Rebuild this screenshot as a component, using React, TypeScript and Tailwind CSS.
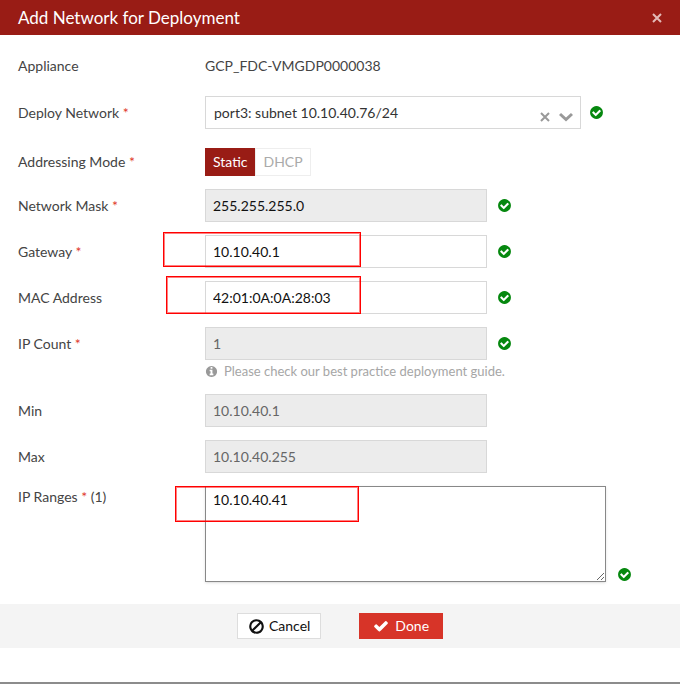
import { ReactNode, useState } from "react";
import clsx from "clsx";

const CHECK_CIRCLE =
  "M1412 734q0-28-18-46l-91-90q-19-19-45-19t-45 19l-408 407-226-226q-19-19-45-19t-45 19l-91 90q-18 18-18 46 0 27 18 45l362 362q19 19 45 19 27 0 46-19l543-543q18-18 18-45zm252 162q0 209-103 385.5t-279.5 279.5-385.5 103-385.5-103-279.5-279.5-103-385.5 103-385.5 279.5-279.5 385.5-103 385.5 103 279.5 279.5 103 385.5z";
const INFO_CIRCLE =
  "M1152 1376v-160q0-14-9-23t-23-9h-96v-512q0-14-9-23t-23-9h-320q-14 0-23 9t-9 23v160q0 14 9 23t23 9h96v320h-96q-14 0-23 9t-9 23v160q0 14 9 23t23 9h448q14 0 23-9t9-23zm-128-896v-160q0-14-9-23t-23-9h-192q-14 0-23 9t-9 23v160q0 14 9 23t23 9h192q14 0 23-9t9-23zm640 416q0 209-103 385.5t-279.5 279.5-385.5 103-385.5-103-279.5-279.5-103-385.5 103-385.5 279.5-279.5 385.5-103 385.5 103 279.5 279.5 103 385.5z";
const CHECK =
  "M1671 566q0 40-28 68l-724 724-136 136q-28 28-68 28t-68-28l-136-136-362-362q-28-28-28-68t28-68l136-136q28-28 68-28t68 28l294 295 656-657q28-28 68-28t68 28l136 136q28 28 28 68z";
const BAN =
  "M1440 893q0-161-87-295l-754 753q137 89 297 89 111 0 211.5-43.5t173.5-116.5 116-174.5 43-212.5zm-999 299l755-754q-135-91-300-91-148 0-273 73t-198 199-73 274q0 162 89 299zm1223-299q0 157-61 300t-163.5 246-245 164-298.5 61-298.5-61-245-164-163.5-246-61-300 61-299.5 163.5-245.5 245-164 298.5-61 298.5 61 245 164 163.5 245.5 61 299.5z";

const Icon = ({ path, className }: { path: string; className: string }) => (
  <svg
    viewBox="0 0 1792 1792"
    fill="currentColor"
    aria-hidden="true"
    className={clsx("shrink-0", className)}>
    <path d={path} />
  </svg>
);

const Cross = ({ className }: { className: string }) => (
  <svg
    viewBox="0 0 10 10"
    stroke="currentColor"
    strokeWidth="2"
    aria-hidden="true"
    className={className}>
    <path d="M1 1l8 8M9 1l-8 8" />
  </svg>
);

const Valid = () => <Icon path={CHECK_CIRCLE} className="size-[15px] text-[#06880f]" />;

const Highlight = ({ className }: { className: string }) => (
  <span
    aria-hidden="true"
    className={clsx(
      "pointer-events-none absolute border border-[#ff0000] ring-1 ring-[#ff0000]/50 ring-inset",
      className
    )}
  />
);

interface RowProps {
  label: string;
  htmlFor?: string;
  required?: boolean;
  suffix?: string;
  className?: string;
  children: ReactNode;
}

const Row = ({ label, htmlFor, required, suffix, className, children }: RowProps) => {
  const text = (
    <>
      {label}
      {required && <span className="text-[#e0382c]"> *</span>}
      {suffix && ` ${suffix}`}
    </>
  );
  return (
    <div className={clsx("flex", className)}>
      <div className="w-[187px] shrink-0">
        {htmlFor ? <label htmlFor={htmlFor}>{text}</label> : <span>{text}</span>}
      </div>
      <div className="relative flex min-w-0 flex-1">{children}</div>
    </div>
  );
};

const inputStyle =
  "h-[33px] w-5/8 border border-[#d8d8d8] px-[7px] text-[#111] outline-none read-only:bg-[#ececec] disabled:bg-[#ececec] disabled:text-[#666]";

const App = () => {
  const [network, setNetwork] = useState("port3");
  const [mode, setMode] = useState("Static");

  return (
    <form
      onSubmit={(e) => e.preventDefault()}
      className="border-b-2 border-[#8c8c8c] bg-white pb-[34px] font-['Lato',sans-serif] text-sm leading-[22px] text-[#444]">
      <header className="flex h-[35px] items-center justify-between bg-[#991c15] pr-[18px] pl-[18px] text-white">
        <h1 className="text-[17px]">Add Network for Deployment</h1>
        <button type="button" aria-label="Close" className="text-[#e3bab7]">
          <Cross className="size-[10px]" />
        </button>
      </header>

      <div className="flex flex-col gap-[13px] pt-5 pr-6 pb-[22px] pl-[18px]">
        <Row label="Appliance" className="mb-[6px]">
          GCP_FDC-VMGDP0000038
        </Row>

        <Row label="Deploy Network" htmlFor="network" required className="mb-[6px] items-center">
          <div className="flex w-full items-center gap-2">
            <div className="flex h-[33px] w-5/6 items-center border border-[#d8d8d8] pr-[7px]">
              <select
                id="network"
                value={network}
                onChange={(e) => setNetwork(e.target.value)}
                className="min-w-0 flex-1 appearance-none bg-transparent pl-2 text-[#333] outline-none">
                <option value="" />
                <option value="port3">port3: subnet 10.10.40.76/24</option>
              </select>
              <button
                type="button"
                aria-label="Clear"
                onClick={() => setNetwork("")}
                className="mr-[9px] pt-2 text-[#999]">
                <Cross className="size-[10px]" />
              </button>
              <span className="pt-2 text-[#999]">
                <svg
                  viewBox="0 0 14 10"
                  fill="none"
                  stroke="currentColor"
                  strokeWidth="3"
                  aria-hidden="true"
                  className="h-[10px] w-[14px]">
                  <path d="M1 2l6 5.5 6-5.5" />
                </svg>
              </span>
            </div>
            <Valid />
          </div>
        </Row>

        <Row label="Addressing Mode" required className="items-center">
          {["Static", "DHCP"].map((item) => (
            <button
              key={item}
              type="button"
              aria-pressed={mode === item}
              onClick={() => setMode(item)}
              className={clsx(
                "h-7 border px-[7px]",
                mode === item
                  ? "border-[#991c15] bg-[#991c15] text-white"
                  : "border-[#eee] bg-white text-[#aaa]"
              )}>
              {item}
            </button>
          ))}
        </Row>

        <Row label="Network Mask" htmlFor="mask" required className="items-center">
          <div className="flex w-full items-center gap-[10px]">
            <input id="mask" readOnly defaultValue="255.255.255.0" className={inputStyle} />
            <Valid />
          </div>
        </Row>

        <Row label="Gateway" htmlFor="gateway" required className="items-center">
          <div className="flex w-full items-center gap-[10px]">
            <input id="gateway" defaultValue="10.10.40.1" className={inputStyle} />
            <Valid />
          </div>
          <Highlight className="-top-[3px] -left-[42px] h-[35px] w-[198px]" />
        </Row>

        <Row label="MAC Address" htmlFor="mac" className="items-center">
          <div className="flex w-full items-center gap-[10px]">
            <input id="mac" defaultValue="42:01:0A:0A:28:03" className={inputStyle} />
            <Valid />
          </div>
          <Highlight className="-top-[5px] -left-[39px] h-[38px] w-[195px]" />
        </Row>

        <div>
          <Row label="IP Count" htmlFor="count" required className="items-center">
            <div className="flex w-full items-center gap-[10px]">
              <input id="count" disabled defaultValue="1" className={inputStyle} />
              <Valid />
            </div>
          </Row>
          <p className="flex items-center gap-[6px] pt-px pl-[187px] text-[13px] leading-5 text-[#a6a6a6]">
            <Icon path={INFO_CIRCLE} className="size-[13px] text-[#999]" />
            Please check our best practice deployment guide.
          </p>
        </div>

        <Row label="Min" htmlFor="min" className="items-center">
          <input id="min" disabled defaultValue="10.10.40.1" className={inputStyle} />
        </Row>

        <Row label="Max" htmlFor="max" className="items-center">
          <input id="max" disabled defaultValue="10.10.40.255" className={inputStyle} />
        </Row>

        <Row label="IP Ranges" htmlFor="ranges" required suffix="(1)">
          <div className="flex w-full items-end gap-[11px]">
            <textarea
              id="ranges"
              defaultValue="10.10.40.41"
              className="h-24 w-[89%] border border-[#888] px-[7px] py-[2px] text-[#111] shadow outline-none"
            />
            <Valid />
          </div>
          <Highlight className="top-0 -left-[30px] h-9 w-[184px]" />
        </Row>
      </div>

      <footer className="flex h-11 items-center justify-center gap-[38px] bg-[#f4f4f4]">
        <button
          type="button"
          className="flex h-[26px] items-center gap-1 border border-[#ddd] bg-white px-[10px] text-[#111]">
          <Icon path={BAN} className="size-[17px]" />
          Cancel
        </button>
        <button
          type="submit"
          className="flex h-[26px] items-center gap-[6px] bg-[#d73428] px-[14px] text-white">
          <Icon path={CHECK} className="size-4" />
          Done
        </button>
      </footer>
    </form>
  );
};

export default App;
